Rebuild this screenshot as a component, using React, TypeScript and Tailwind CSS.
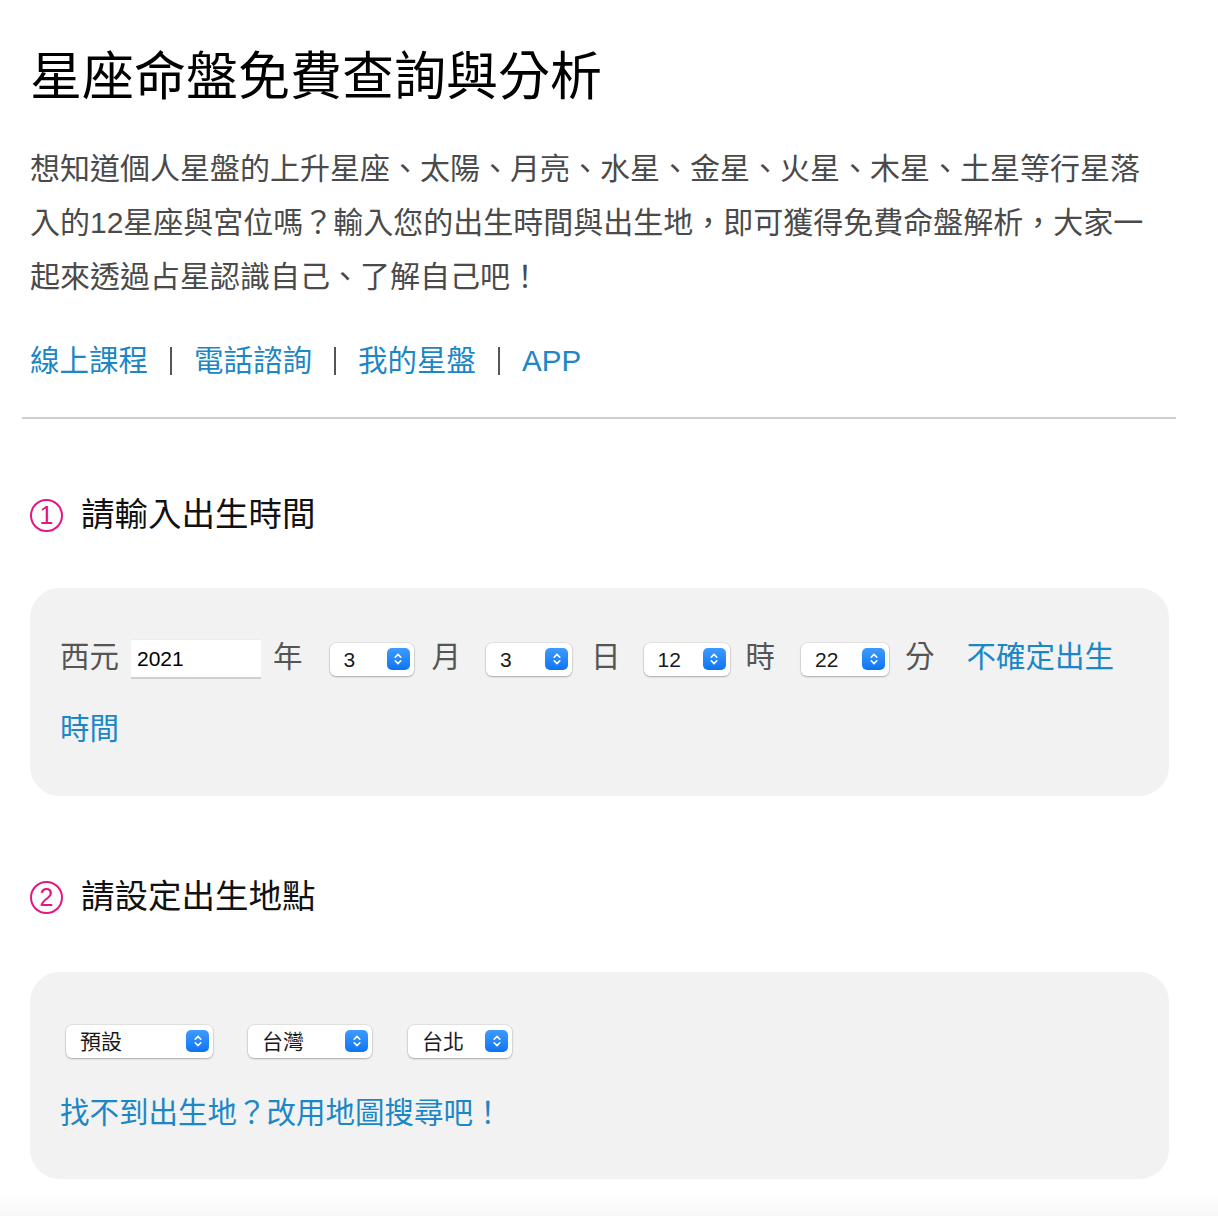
import React from "react";

const FONT = { fontFamily: '"Liberation Sans", "Noto Sans CJK TC", sans-serif' };

function Stepper() {
  return (
    <span className="flex h-[22px] w-[23px] items-center justify-center rounded-[5px] bg-gradient-to-b from-[#3d9bff] to-[#0a74f2]">
      <svg width="10" height="14" viewBox="0 0 10 14" fill="none">
        <path d="M2.2 5.2 L5 2.4 L7.8 5.2" stroke="white" strokeWidth="1.6" strokeLinecap="round" strokeLinejoin="round" />
        <path d="M2.2 8.8 L5 11.6 L7.8 8.8" stroke="white" strokeWidth="1.6" strokeLinecap="round" strokeLinejoin="round" />
      </svg>
    </span>
  );
}

function FakeSelect({ value, w, cls = "" }: { value: string; w: string; cls?: string }) {
  return (
    <span
      className={`inline-flex h-[33px] items-center justify-between rounded-[6px] bg-white pl-[14px] pr-[4px] align-middle text-[21px] leading-none text-[#1a1a1a] shadow-[0_0_0_0.5px_rgba(0,0,0,0.12),0_1px_2px_rgba(0,0,0,0.25)] ${w} ${cls}`}
    >
      <span>{value}</span>
      <Stepper />
    </span>
  );
}

function Circled({ n }: { n: string }) {
  return (
    <span className="mr-[18px] flex h-[33px] w-[33px] items-center justify-center rounded-full border-[2px] border-[#e3177f] text-[25px] leading-none font-normal text-[#e3177f]">
      {n}
    </span>
  );
}

export default function App() {
  return (
    <div className="min-h-[1216px] bg-white" style={FONT}>
      <div className="px-[22px]">
        <div className="px-[8px] pt-[44px]">
          <h1 className="text-[52px] leading-[66px] font-normal text-black">星座命盤免費查詢與分析</h1>
          <p className="mt-[32px] w-[1120px] text-[30px] leading-[54px] text-[#4a4a4a]">
            想知道個人星盤的上升星座、太陽、月亮、水星、金星、火星、木星、土星等行星落入的12星座與宮位嗎？輸入您的出生時間與出生地，即可獲得免費命盤解析，大家一起來透過占星認識自己、了解自己吧！
          </p>
          <div className="mt-[30px] flex items-center text-[29.5px] leading-[54px] text-[#1b87c6]">
            <span>線上課程</span>
            <span className="mx-[22px] h-[28px] w-[2px] bg-[#555]"></span>
            <span>電話諮詢</span>
            <span className="mx-[22px] h-[28px] w-[2px] bg-[#555]"></span>
            <span>我的星盤</span>
            <span className="mx-[22px] h-[28px] w-[2px] bg-[#555]"></span>
            <span>APP</span>
          </div>
        </div>
        <div className="mt-[29px] h-[2px] w-[1154px] bg-[#cfcfcf]"></div>

        <div className="px-[8px]">
          <h2 className="mt-[72px] flex items-center text-[33.5px] leading-[48px] font-normal text-[#111]">
            <Circled n="1" />
            請輸入出生時間
          </h2>

          <div className="mt-[49px] w-[1139px] rounded-[30px] bg-[#f2f2f2] pl-[30px] pr-[30px] pt-[33px] pb-[31px] text-[29.5px] leading-[72px] text-[#555]">
            <span>西元</span>
            <span className="ml-[12px] mr-[12px] inline-flex h-[40px] w-[130px] items-center border-b-[2px] border-t border-b-[#cfcfcf] border-t-[#ececec] bg-white pl-[6px] align-middle text-[21px] leading-none text-black">2021</span>
            <span>年</span>
            <FakeSelect value="3" w="w-[84px]" cls="ml-[27px] mr-[18px]" />
            <span>月</span>
            <FakeSelect value="3" w="w-[86px]" cls="ml-[25px] mr-[19px]" />
            <span>日</span>
            <FakeSelect value="12" w="w-[86px]" cls="ml-[23px] mr-[16px]" />
            <span>時</span>
            <FakeSelect value="22" w="w-[88px]" cls="ml-[26px] mr-[16px]" />
            <span>分</span>
            <span className="ml-[32px] text-[#1b87c6]">不確定出生時間</span>
          </div>

          <h2 className="mt-[77px] flex items-center text-[33.5px] leading-[48px] font-normal text-[#111]">
            <Circled n="2" />
            請設定出生地點
          </h2>

          <div className="mt-[51px] w-[1139px] rounded-[30px] bg-[#f2f2f2] pl-[30px] pr-[30px] pt-[33px] pb-[30px] text-[29.5px] leading-[72px] text-[#555]">
            <div className="flex h-[72px] items-center">
              <FakeSelect value="預設" w="w-[147px]" cls="ml-[6px]" />
              <FakeSelect value="台灣" w="w-[124px]" cls="ml-[35px]" />
              <FakeSelect value="台北" w="w-[104px]" cls="ml-[36px]" />
            </div>
            <div className="text-[#1b87c6]">找不到出生地？改用地圖搜尋吧！</div>
          </div>
        </div>
      </div>
      <div className="mt-[13px] h-[26px] bg-gradient-to-b from-white to-[#f7f7f7]"></div>
    </div>
  );
}
